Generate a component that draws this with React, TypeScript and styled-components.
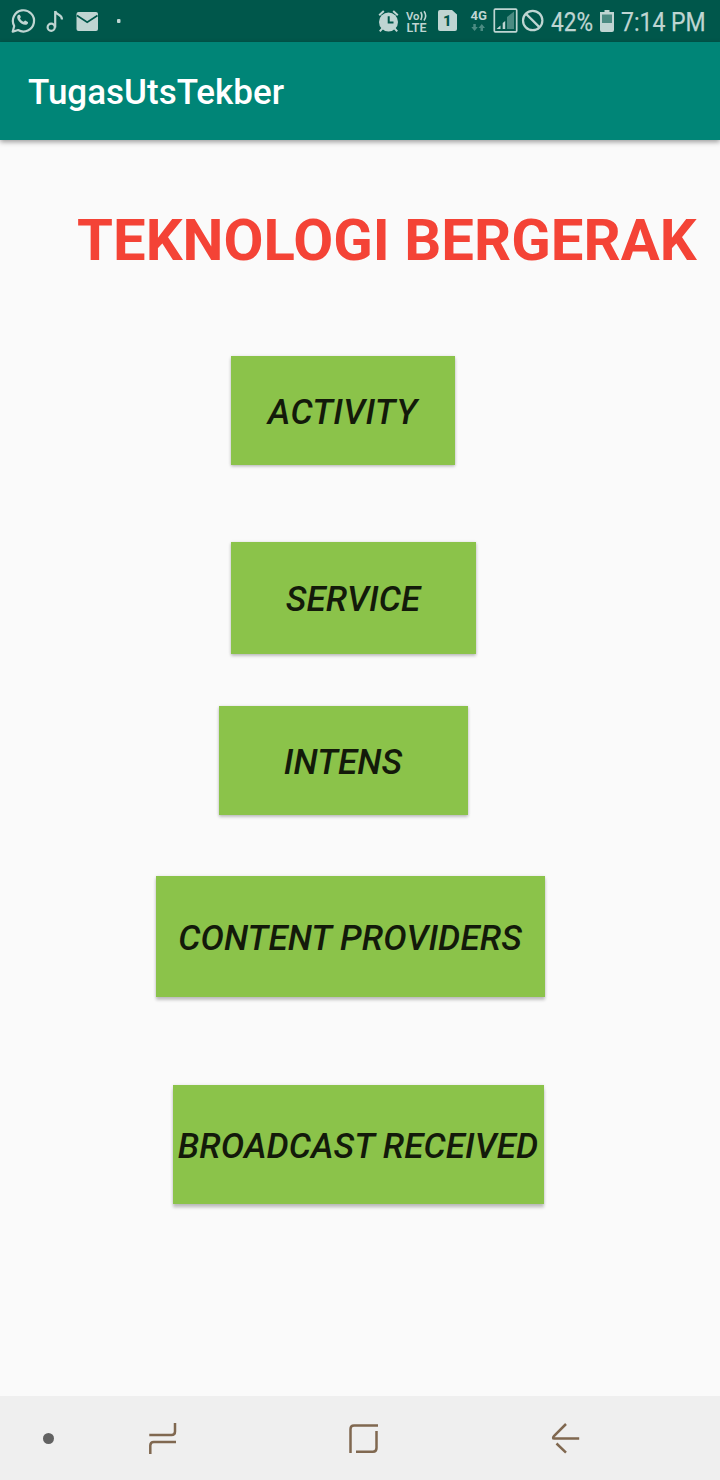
import React from "react";
import styled, { createGlobalStyle } from "styled-components";

const GlobalStyle = createGlobalStyle`
  * { box-sizing: border-box; }
  body { margin: 0; background: #fafafa; font-family: Roboto, "Liberation Sans", sans-serif; }
  svg { display: block; flex: none; }
`;

const Screen = styled.div`
  display: flex;
  flex-direction: column;
  width: 720px;
  height: 1480px;
  overflow: hidden;
  background: #fafafa;
`;

const StatusBar = styled.header`
  display: flex;
  justify-content: space-between;
  height: 42px;
  flex: none;
  background: #00574b;
  color: #bfd5d2;
`;

const StatusText = styled.span<{ $width: number; $scale: number }>`
  width: ${(p) => p.$width}px;
  height: 42px;
  font-size: 26px;
  line-height: 44px;
  white-space: nowrap;
  -webkit-text-stroke: 0.25px #bfd5d2;
  transform: scaleX(${(p) => p.$scale});
  transform-origin: left;
`;

const AppBar = styled.div`
  display: flex;
  align-items: center;
  height: 98px;
  flex: none;
  padding: 4px 28px 0;
  background: #008577;
  box-shadow: 0 2px 5px rgba(0, 0, 0, 0.38);
`;

const AppTitle = styled.h1`
  margin: 0;
  font-size: 35px;
  font-weight: 500;
  line-height: 42px;
  letter-spacing: 0;
  color: #fff;
`;

const Content = styled.main`
  display: flex;
  flex-direction: column;
  align-items: flex-start;
  flex: 1;
`;

const Heading = styled.h2`
  margin: 66px 0 0 77px;
  height: 67px;
  font-size: 58px;
  font-weight: 700;
  line-height: 68px;
  letter-spacing: 0.05px;
  white-space: nowrap;
  color: #f44336;
`;

const MenuButton = styled.button<{
  $left: number;
  $top: number;
  $width: number;
  $height: number;
  $lift: number;
  $spacing: number;
}>`
  width: ${(p) => p.$width}px;
  height: ${(p) => p.$height}px;
  margin: ${(p) => p.$top}px 0 0 ${(p) => p.$left}px;
  padding: 4px 1px 0 0;
  border: 0;
  background: #8bc34a;
  box-shadow: 0 ${(p) => p.$lift}px 3px rgba(0, 0, 0, 0.22), 0 0 3px rgba(0, 0, 0, 0.1);
  color: #131a0a;
  font: italic 500 35px/42px Roboto, "Liberation Sans", sans-serif;
  letter-spacing: ${(p) => p.$spacing}px;
  white-space: nowrap;
`;

const NavBar = styled.nav`
  height: 84px;
  flex: none;
  background: #efefef;
`;

const items = [
  { label: "ACTIVITY", left: 231, top: 83, width: 224, height: 109, lift: 1.5, spacing: 0.3 },
  { label: "SERVICE", left: 231, top: 77, width: 245, height: 112, lift: 2, spacing: 0.1 },
  { label: "INTENS", left: 219, top: 52, width: 249, height: 109, lift: 2, spacing: 0.1 },
  { label: "CONTENT PROVIDERS", left: 156, top: 61, width: 389, height: 121, lift: 3, spacing: 0.1 },
  { label: "BROADCAST RECEIVED", left: 173, top: 88, width: 371, height: 119, lift: 3.5, spacing: 0.07 },
];

const NotificationIcons = () => (
  <svg width="140" height="42" viewBox="0 0 140 42" fill="none" stroke="#bfd5d2">
    <path d="M12.700 31.700 14.200 26A10.600 10.600 0 1 1 18.100 30Z" strokeWidth="2.200" strokeLinejoin="round" />
    <path d="M18.800 14.700c-1 .3-1.800 1.400-1.600 3 .3 2.300 2.300 4.600 4.500 6 2 1.300 4.300 1.600 5.500.5.900-.8 1-2 .6-2.300l-2.500-1.300c-.6-.2-1 .8-1.600 1.200-1.700-.6-3-1.900-3.700-3.500.4-.5 1-1 .8-1.500l-1-2.100z" fill="#bfd5d2" stroke="none" />
    <circle cx="51.200" cy="27.200" r="3.600" strokeWidth="2.200" />
    <path d="M55.200 27.500V11M55.200 11c1 4.500 6.800 2.500 6.800 8.500" strokeWidth="2.200" />
    <rect x="76.500" y="12" width="21.500" height="19" rx="2" fill="#bfd5d2" stroke="none" />
    <path d="m77 15.500 10.200 6.700 10.300-6.700" stroke="#00574b" strokeWidth="1.700" />
    <rect x="117" y="19" width="3.500" height="4" rx="1" fill="#bfd5d2" stroke="none" />
  </svg>
);

const SystemIcons = () => (
  <svg width="180" height="42" viewBox="371 0 180 42" fontFamily="Roboto, sans-serif" fill="#bfd5d2">
    <circle cx="388.500" cy="22" r="9.500" />
    <g fill="none" stroke="#bfd5d2" strokeWidth="2">
      <path d="m379.200 15.200 4.600-4.200M393.200 11l4.600 4.200M382.300 28.500l-2.500 2.800M394.700 28.500l2.500 2.800" />
      <path d="M388.700 16.200v6.300h4.800" stroke="#00574b" />
      <rect x="494.300" y="9.200" width="22.400" height="22.600" rx="1" strokeWidth="1.700" />
      <circle cx="532.700" cy="20.500" r="9.700" strokeWidth="2.200" />
      <path d="m525.800 13.600 13.800 13.800" strokeWidth="2.200" />
      <path d="M420.700 12q2.300 3.800 0 8M424 11.200q3.300 4.500 0 9.300" strokeWidth="1.600" />
    </g>
    <text fontWeight="600">
      <tspan x="406" y="20" fontSize="11.500" textLength="13.500" lengthAdjust="spacingAndGlyphs">Vo</tspan>
      <tspan x="406.500" y="32" fontSize="12.200" textLength="20" lengthAdjust="spacingAndGlyphs">LTE</tspan>
    </text>
    <path d="M440 10h12l5 4.500V29a2 2 0 0 1-2 2h-15a2 2 0 0 1-2-2V12a2 2 0 0 1 2-2z" />
    <text x="443" y="26" fontSize="15" fontWeight="800" fill="#00574b">1</text>
    <text x="470.500" y="20" fontSize="12" fontWeight="700" textLength="16.500" lengthAdjust="spacingAndGlyphs">4G</text>
    <g fill="#4b8b82">
      <path d="M473.300 24h2.500v3h2l-3.200 4-3.300-4h2zM480.500 31h2.500v-3h2l-3.200-4-3.300 4h2z" />
      <path d="m507 17 7-5.500V29h-7z" />
    </g>
    <path d="M496.500 29l4-3.500V29zM502.700 23l2.500-2v8h-2.500z" />
  </svg>
);

const BatteryIcon = () => (
  <svg width="15" height="42" viewBox="0 0 15 42" fill="#bfd5d2">
    <path d="M4.500 10h5v2H14v18a2 2 0 0 1-2 2H2a2 2 0 0 1-2-2V12h4.500z" />
    <path d="M2 14.500h10V23H2z" fill="#4b8b82" />
  </svg>
);

const StatusGroup = styled.div`
  display: flex;
`;

const BatterySlot = styled.div`
  width: 21px;
`;

const NavIcons = () => (
  <svg width="720" height="84" viewBox="0 1396 720 84" fill="none" stroke="#806850" strokeWidth="2.500">
    <circle cx="48.500" cy="1438.500" r="5.500" fill="#626262" stroke="none" />
    <path d="M149.300 1435h22.200q3.500 0 3.500-3.500V1423M176 1442h-22.200q-3.500 0-3.500 3.500V1454" />
    <path d="M378 1425.500h-24q-3.500 0-3.500 3.500v24M376.500 1431v17q0 3.700-3.500 3.700h-17" />
    <path d="M566 1424l-11.800 11.800q-2.200 2.800 0 2.800h25M556.500 1443.500l9.500 9.200" />
  </svg>
);

export default function App() {
  return (
    <Screen>
      <GlobalStyle />
      <StatusBar>
        <NotificationIcons />
        <StatusGroup>
          <SystemIcons />
          <StatusText $width={49} $scale={0.87}>42%</StatusText>
          <BatterySlot>
            <BatteryIcon />
          </BatterySlot>
          <StatusText $width={99} $scale={0.885}>7:14 PM</StatusText>
        </StatusGroup>
      </StatusBar>
      <AppBar>
        <AppTitle>TugasUtsTekber</AppTitle>
      </AppBar>
      <Content>
        <Heading>TEKNOLOGI BERGERAK</Heading>
        {items.map((item) => (
          <MenuButton
            key={item.label}
            $left={item.left}
            $top={item.top}
            $width={item.width}
            $height={item.height}
            $lift={item.lift}
            $spacing={item.spacing}
          >
            {item.label}
          </MenuButton>
        ))}
      </Content>
      <NavBar>
        <NavIcons />
      </NavBar>
    </Screen>
  );
}
